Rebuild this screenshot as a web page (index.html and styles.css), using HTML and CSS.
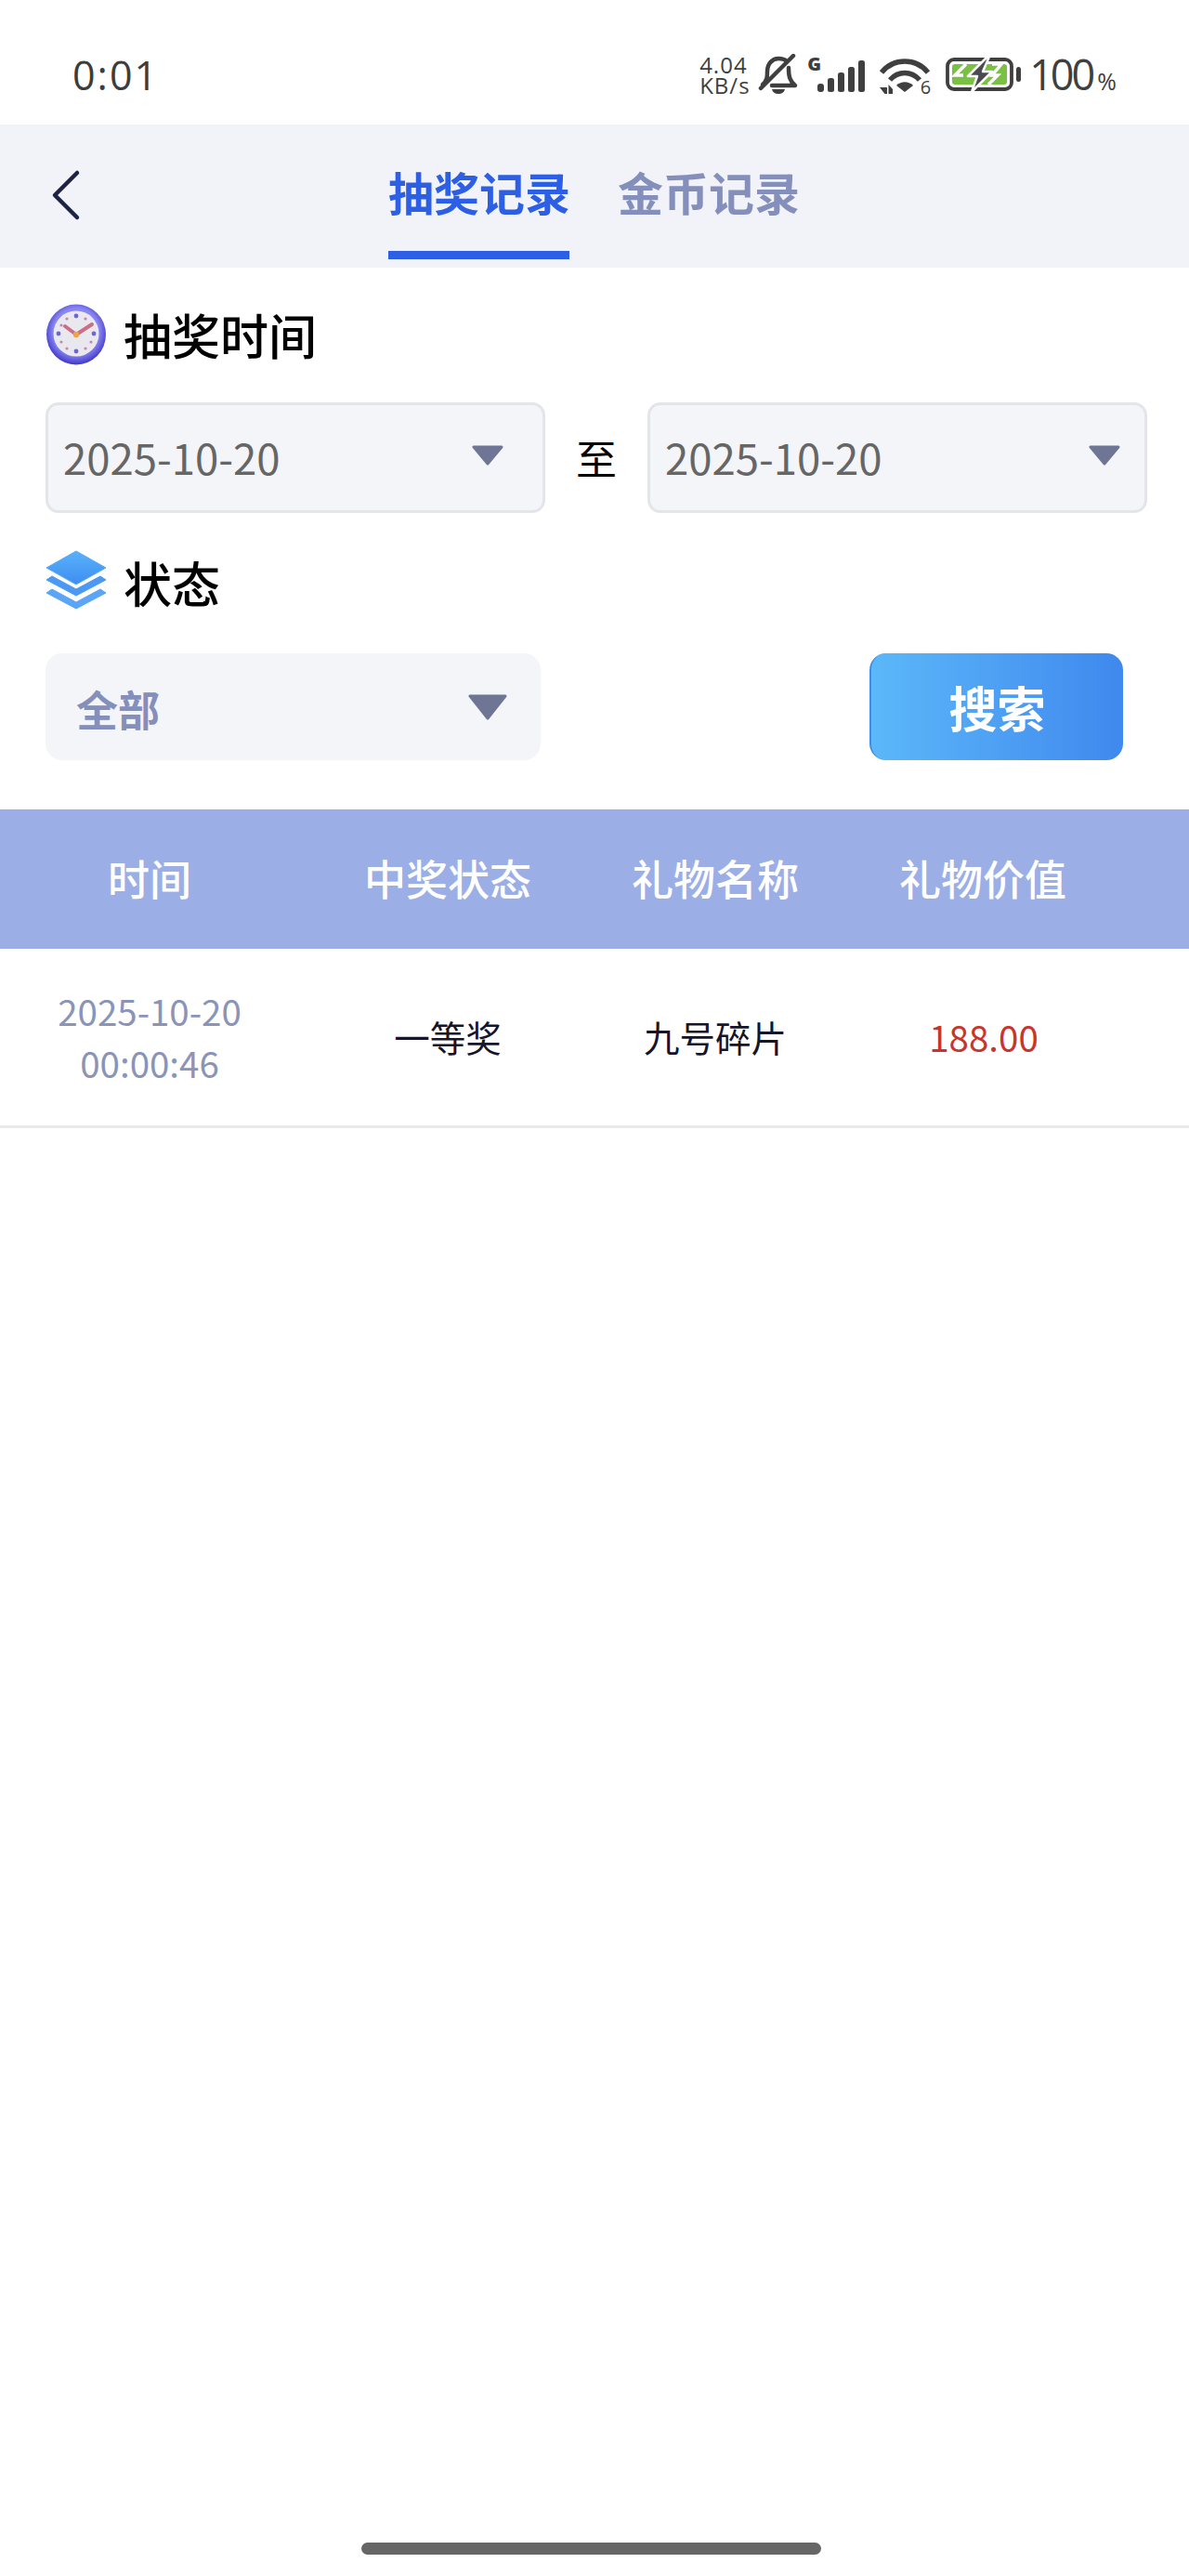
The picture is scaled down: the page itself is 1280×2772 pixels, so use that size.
FILE: index.html
```html
<!DOCTYPE html>
<html lang="zh-CN">
<head>
<meta charset="utf-8">
<title>抽奖记录</title>
<link rel="stylesheet" href="styles.css">
</head>
<body>
<div class="page">
  <header class="status">
    <span class="clock">0:01</span>
    <div class="status-right">
      <div class="speed"><span>4.04</span><span>KB/s</span></div>
      <svg class="i-bell" width="44" height="44" viewBox="0 0 44 44">
        <path d="M5 33 C10 29 10 24 10 19 C10 10 16 5 22 5 C26 5 29 6 31 8 M33 15 C33 24 34 29 40 34 L15 34" fill="none" stroke="#3f3f3f" stroke-width="4.500" stroke-linejoin="round" stroke-linecap="round"/>
        <path d="M3 37 L38 2" stroke="#3f3f3f" stroke-width="4.500" stroke-linecap="round"/>
        <path d="M15 38 H29 C28 42 25 43 22 43 C19 43 16 42 15 38Z" fill="#3f3f3f"/>
      </svg>
      <div class="signal">
        <span class="g">G</span>
        <svg width="52" height="36" viewBox="0 0 52 36">
          <g fill="#3f3f3f"><rect x="0" y="25" width="7" height="9" rx="3"/><rect x="11" y="19" width="7" height="15" rx="2.500"/><rect x="22" y="13" width="7" height="21" rx="2.500"/><rect x="33" y="7" width="7" height="27" rx="2.500"/><rect x="44" y="0" width="7" height="34" rx="2.500"/></g>
        </svg>
      </div>
      <div class="wifi">
        <svg width="56" height="42" viewBox="0 0 56 42">
          <g fill="none" stroke="#3f3f3f" stroke-width="5.500"><path d="M3 17 C16 1 40 1 53 17"/><path d="M12 25 C21 15 35 15 44 25"/></g>
          <path d="M19 31 C24 26 32 26 37 31 L28 38Z" fill="#3f3f3f"/>
          <path d="M1 33 H9 V40 H6.500 Z M15 40 H10.500 V30 L15 35 Z" fill="#3f3f3f"/>
        </svg>
        <span class="six">6</span>
      </div>
      <svg class="i-batt" width="82" height="38" viewBox="0 0 82 38">
        <rect x="2" y="3" width="69" height="32" rx="7" fill="#fff" stroke="#3f3f3f" stroke-width="3.800"/>
        <rect x="7" y="8" width="59" height="22" rx="3" fill="#7ac143"/>
        <path d="M22 8 L10 20 H19 M50 8 H60 L50 20 H56 L46 30" fill="none" stroke="#fff" stroke-width="3.500"/>
        <path d="M45 0 L24 21 H34 L28 38 L50 16 H40 L47 0Z" fill="#4a4a50" stroke="#fff" stroke-width="2.500" stroke-linejoin="round"/>
        <rect x="76" y="11" width="5" height="16" rx="2.500" fill="#3f3f3f"/>
      </svg>
      <div class="level"><span class="num">100</span><span class="pct">%</span></div>
    </div>
  </header>

  <nav class="nav">
    <svg class="back" width="34" height="56" viewBox="0 0 34 56"><path d="M29 4 L5 28 L29 52" fill="none" stroke="#1d2344" stroke-width="4.500" stroke-linecap="round" stroke-linejoin="round"/></svg>
    <div class="tabs">
      <div class="tab tab-on">抽奖记录</div>
      <div class="tab">金币记录</div>
    </div>
  </nav>

  <section class="filters">
    <div class="label">
      <svg width="66" height="66" viewBox="0 0 66 66">
        <defs>
          <radialGradient id="rim" cx="50%" cy="45%" r="55%"><stop offset="70%" stop-color="#8b86f2"/><stop offset="100%" stop-color="#3e36c8"/></radialGradient>
        </defs>
        <ellipse cx="33" cy="33" rx="32" ry="32.500" fill="url(#rim)"/>
        <circle cx="33" cy="32" r="24.500" fill="#e9e8ef"/>
        <g fill="#6f63d8"><circle cx="33" cy="13" r="2.400"/><circle cx="33" cy="51" r="2.400"/><circle cx="14" cy="32" r="2.400"/><circle cx="52" cy="32" r="2.400"/></g>
        <g fill="#b98cb2"><circle cx="23" cy="16" r="1.600"/><circle cx="43" cy="16" r="1.600"/><circle cx="23" cy="48" r="1.600"/><circle cx="43" cy="48" r="1.600"/><circle cx="17" cy="23" r="1.600"/><circle cx="49" cy="23" r="1.600"/><circle cx="17" cy="41" r="1.600"/><circle cx="49" cy="41" r="1.600"/></g>
        <path d="M33 33 L21 24 M33 33 L50 22" stroke="#cb6f86" stroke-width="4" stroke-linecap="round"/>
        <circle cx="33" cy="33" r="3.200" fill="#eea24a"/>
      </svg>
      <span>抽奖时间</span>
    </div>
    <div class="dates">
      <div class="date"><span>2025-10-20</span><svg class="arrow" width="34" height="22" viewBox="0 0 34 22"><path d="M2 2 H32 L17 20Z" fill="#6f7594" stroke="#6f7594" stroke-width="3" stroke-linejoin="round"/></svg></div>
      <span class="to">至</span>
      <div class="date date-end"><span>2025-10-20</span><svg class="arrow" width="34" height="22" viewBox="0 0 34 22"><path d="M2 2 H32 L17 20Z" fill="#6f7594" stroke="#6f7594" stroke-width="3" stroke-linejoin="round"/></svg></div>
    </div>
    <div class="label label-state">
      <svg class="layers" width="66" height="66" viewBox="0 0 66 66">
        <defs>
          <linearGradient id="lay" x1="0" y1="0" x2="0" y2="1"><stop offset="0" stop-color="#58b2fb"/><stop offset="1" stop-color="#3f8df0"/></linearGradient>
        </defs>
        <path d="M1 46 L7 42 L33 56 L59 42 L65 46 L33 63Z" fill="#5aa5f6" stroke="#5aa5f6" stroke-linejoin="round"/>
        <path d="M1 32 L7 28 L33 42 L59 28 L65 32 L33 49Z" fill="#4c99f4" stroke="#4c99f4" stroke-linejoin="round"/>
        <path d="M33 1 L65 19 L33 37 L1 19Z" fill="url(#lay)" stroke="#58a8f8" stroke-linejoin="round"/>
      </svg>
      <span>状态</span>
    </div>
    <div class="search-row">
      <div class="select"><span>全部</span><svg class="arrow-big" width="42" height="28" viewBox="0 0 42 28"><path d="M2 2 H40 L21 26Z" fill="#6f7594" stroke="#6f7594" stroke-width="3" stroke-linejoin="round"/></svg></div>
      <button class="search">搜索</button>
    </div>
  </section>

  <section class="table">
    <div class="row head">
      <div class="c1">时间</div><div>中奖状态</div><div>礼物名称</div><div>礼物价值</div>
    </div>
    <div class="row body">
      <div class="c1 when"><span>2025-10-20</span><span>00:00:46</span></div>
      <div>一等奖</div>
      <div>九号碎片</div>
      <div class="price">188.00</div>
    </div>
  </section>

  <div class="home"></div>
</div>
</body>
</html>
```

FILE: styles.css
```css
* { box-sizing: border-box; }
html, body { margin: 0; padding: 0; background: #fff; }
body { font-family: "Noto Sans CJK SC", "Noto Sans", sans-serif; }
.page { width: 1280px; height: 2772px; display: flex; flex-direction: column; overflow: hidden; }

.status { height: 134px; display: flex; align-items: flex-start; justify-content: space-between; padding: 56px 78px 0 78px; }
.clock { font-family: "Open Sans", sans-serif; font-size: 43px; line-height: 50px; font-weight: 500; color: #3d3d3d; letter-spacing: 2px; }
.status-right { display: flex; align-items: flex-start; margin-top: 2px; }
.speed { display: flex; flex-direction: column; font-family: "Open Sans", sans-serif; font-size: 24px; line-height: 22px; letter-spacing: 1px; color: #3f3f3f; width: 63px; margin-top: 1px; }
.signal { position: relative; width: 63px; height: 40px; margin-left: 9px; margin-top: 4px; }
.signal svg { position: absolute; left: 11px; top: 3px; }
.g { position: absolute; left: 0; top: -5px; font-family: "Open Sans", sans-serif; font-weight: 800; font-size: 20px; line-height: 24px; color: #3f3f3f; }
.wifi { position: relative; width: 56px; height: 42px; margin-left: 14px; margin-top: 3px; }
.six { position: absolute; right: 0; bottom: -2px; font-family: "Open Sans", sans-serif; font-size: 20px; line-height: 22px; color: #3f3f3f; }
.i-batt { margin-left: 16px; margin-top: 3px; }
.level { display: flex; align-items: baseline; margin-left: 8px; margin-top: -3px; color: #3f3f3f; font-family: "Open Sans", sans-serif; }
.num { font-size: 45px; line-height: 50px; font-weight: 500; letter-spacing: -3px; }
.pct { font-size: 25px; margin-left: 5px; }

.nav { height: 154px; background: #f2f3f8; display: flex; position: relative; padding-left: 54px; }
.back { margin-top: 48px; }
.tabs { display: flex; gap: 52px; margin-left: 330px; }
.tab { height: 145px; width: 195px; padding-top: 39px; font-size: 49px; line-height: 66px; font-weight: 700; color: #8490bb; white-space: nowrap; }
.tab-on { color: #2c5fe3; border-bottom: 9px solid #2c5fe3; }

.filters { padding: 39px 45px 53px 49px; }
.label { display: flex; align-items: center; gap: 18px; height: 66px; font-size: 52px; line-height: 66px; font-weight: 500; color: #000; }
.label-state { margin-top: 42px; }
.layers { margin-top: -4px; }
.dates { display: flex; align-items: center; margin-top: 40px; }
.date { width: 538px; height: 119px; background: #f4f5f9; border: 3px solid #e4e5ea; border-radius: 14px; display: flex; align-items: center; justify-content: space-between; padding: 0 42px 3px 16px; font-size: 45.500px; color: #666; }
.date-end { padding-right: 26px; }
.to { width: 110px; text-align: center; font-size: 44px; line-height: 60px; padding-bottom: 2px; color: #000; }
.arrow { display: block; margin-top: -3px; }
.arrow-big { display: block; margin-top: -3px; }
.search-row { display: flex; margin-top: 43px; justify-content: space-between; padding-right: 26px; }
.select { width: 533px; height: 115px; background: #f4f5f9; border-radius: 18px; display: flex; align-items: center; justify-content: space-between; padding: 3px 36px 0 33px; font-size: 45px; font-weight: 700; color: #8490bb; }
.search { width: 273px; height: 115px; border: 0; border-left: 2px solid #3f8fe8; border-radius: 18px; background: linear-gradient(90deg, #5cb8f9, #3f88ee); color: #fff; font-family: inherit; font-size: 52px; font-weight: 700; padding: 0; }

.row { display: grid; grid-template-columns: 338px 288px 288px 288px; align-items: center; text-align: center; }
.c1 { padding-right: 16px; }
.head { height: 150px; background: #9baee6; color: #fff; font-size: 45px; font-weight: 500; padding-bottom: 3px; }
.body { height: 193px; border-bottom: 3px solid #e9e9ec; font-size: 38.500px; color: #15152b; padding-bottom: 3px; }
.when { display: flex; flex-direction: column; color: #8a94b8; line-height: 56px; }
.price { color: #c8352c; padding-left: 2px; }

.home { width: 495px; height: 13px; border-radius: 7px; background: #666; margin: auto 0 23px 389px; }
```
